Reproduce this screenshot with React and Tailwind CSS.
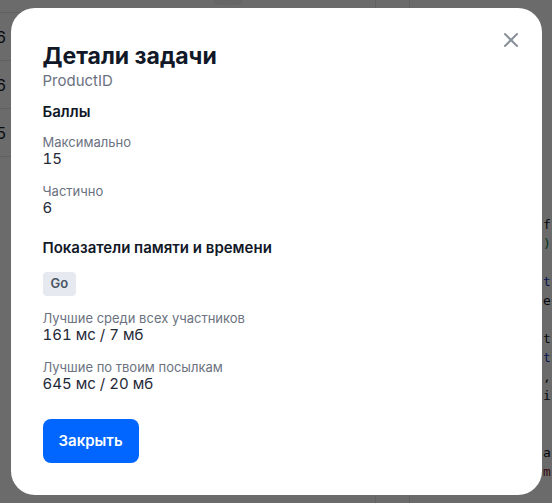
import React from 'react'
import { X } from 'lucide-react'

const rows = ['6', '6', '5']

const code = [
  '', '', '', '', '', '', '', '', '', '', '',
  { c: 'f', cls: 'text-gray-900' },
  { c: ')', cls: 'text-green-700' },
  '',
  { c: 't', cls: 'text-blue-800' },
  { c: 'e', cls: 'text-gray-900' },
  '',
  { c: 't', cls: 'text-gray-900' },
  { c: 't', cls: 'text-blue-800' },
  { c: ',', cls: 'text-gray-900' },
  { c: 'i', cls: 'text-gray-900' },
  '', '',
  { c: 'a', cls: 'text-gray-900' },
  { c: 'm', cls: 'text-red-900' },
  '',
]

const Stat = ({ label, value, className = '' }) => (
  <div className={className}>
    <p className="text-[13px] leading-4 text-[#6b7280]">{label}</p>
    <p className="text-[15px] leading-4 mt-px tabular-nums text-[#1f2937]">{value}</p>
  </div>
)

const App = () => {
  return (
    <div className="relative w-[552px] h-[503px] overflow-hidden bg-white font-['Inter',sans-serif]">
      {/* page behind the dialog */}
      <div className="flex h-full">
        <div className="w-[376px] border-r border-gray-200">
          <div className="h-[13px] border-b border-gray-200 flex">
            <div className="ml-[213px] w-[30px] h-[5px] rounded-b-md bg-gray-100"></div>
          </div>
          {rows.map((n, i) => (
            <div key={i} className="h-12 border-b border-gray-200 flex items-center text-[#111827]">
              <span className="w-[6px] overflow-hidden flex justify-end">{n}</span>
            </div>
          ))}
        </div>
        <div className="w-[34px] border-r border-gray-200"></div>
        <div className="flex-1 pt-[6px] pl-[133px] font-['DejaVu_Sans_Mono',monospace] text-[13px] leading-[19px]">
          {code.map((l, i) => (
            <div key={i} className={`h-[19px] ${l ? l.cls : ''}`}>{l ? l.c : ''}</div>
          ))}
        </div>
      </div>

      {/* overlay */}
      <div className="absolute inset-0 bg-black/[0.58] flex items-center justify-center">
        <div className="relative w-[531px] bg-white rounded-3xl p-8">
          <button className="absolute right-[19px] top-5 text-[#8a9099]">
            <X size={24} strokeWidth={2} />
          </button>

          <h2 className="text-[23px] leading-8 font-bold text-[#111827]">Детали задачи</h2>
          <p className="text-[15px] leading-[18px] text-[#6b7280]">ProductID</p>

          <h3 className="mt-[10px] text-[15px] leading-6 font-semibold text-[#111827]">Баллы</h3>
          <Stat className="mt-[10px]" label="Максимально" value="15" />
          <Stat className="mt-4" label="Частично" value="6" />

          <h3 className="mt-5 text-[15px] leading-6 font-semibold text-[#111827]">Показатели памяти и времени</h3>
          <div className="mt-3 flex">
            <span className="px-2 h-6 flex items-center rounded bg-[#e6eaf0] text-[13px] font-semibold text-[#4b5563]">Go</span>
          </div>
          <Stat className="mt-[14px]" label="Лучшие среди всех участников" value="161 мс / 7 мб" />
          <Stat className="mt-4" label="Лучшие по твоим посылкам" value="645 мс / 20 мб" />

          <button className="mt-[27px] h-11 px-4 rounded-lg bg-[#0066ff] text-white text-[15px] font-semibold">
            Закрыть
          </button>
        </div>
      </div>
    </div>
  )
}

export default App
